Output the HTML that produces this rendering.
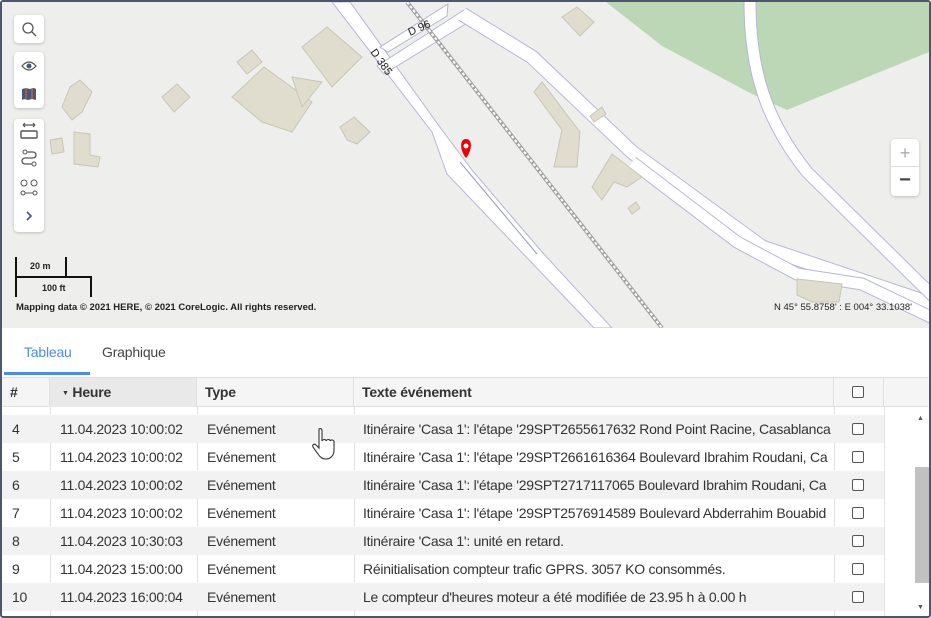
<!DOCTYPE html>
<html><head><meta charset="utf-8">
<style>
*{box-sizing:border-box;margin:0;padding:0}
body{width:931px;height:618px;overflow:hidden;background:#fff;font-family:"Liberation Sans",Arial,sans-serif;color:#333}
#frame{position:absolute;left:0;top:0;width:931px;height:618px;border:2px solid #4d5670;border-radius:3px;overflow:hidden}
#map{position:absolute;left:0;top:0;width:927px;height:326px;background:#eeefed;overflow:hidden}
.btn{position:absolute;left:12px;width:30px;background:#fff;border-radius:4px;box-shadow:0 1px 3px rgba(0,0,0,.2)}
.attr{position:absolute;font-size:9.5px;font-weight:bold;color:#222}
#tabs{position:absolute;top:326px;left:0;width:927px;height:50px;background:#fff}
.tab{position:absolute;top:16px;font-size:14px;letter-spacing:-0.2px}
#grid{position:absolute;top:373px;left:0;width:927px;height:243px}
.hdr{position:absolute;top:2px;height:30px;background:#f5f5f5;border-top:1px solid #e0e0e0;border-bottom:1px solid #e0e0e0;width:927px}
.hc{position:absolute;top:0;height:29px;line-height:28px;font-size:14px;font-weight:bold;padding-left:8px;border-right:1px solid #e0e0e0;letter-spacing:-0.2px}
.row{position:absolute;left:0;width:882px;height:28px;font-size:14px;line-height:28px;letter-spacing:-0.25px}
.row span{position:absolute;top:0;white-space:nowrap;overflow:hidden}
.cb{position:absolute;width:12px;height:12px;border:1px solid #555;border-radius:2px;background:#fff}
.vl{position:absolute;top:32px;width:1px;height:211px;background:#e3e3e3}
</style></head><body>
<div id="frame">
<div id="map">
<svg width="927" height="326" style="position:absolute;left:0;top:0">
<polygon points="604,0 927,0 927,50 785,108 750,92 660,44" fill="#bcd7b5"/>
<g stroke="#b6b7d3" stroke-width="1" fill="#fff">
<polygon points="330,0 348,0 440,128 470,168 540,250 610,326 592,326 445,172 430,130"/>
<polygon points="375,64 382,72 470,18 462,8"/>
<polygon points="378,45 386,50 445,14 446,2"/>
</g>
<g fill="none" stroke-linecap="butt">
<path d="M460,12 L530,55 L630,150 L760,245 L930,302" stroke="#b6b7d3" stroke-width="15"/>
<path d="M460,12 L530,55 L630,150 L760,245 L930,302" stroke="#fff" stroke-width="13"/>
<path d="M748,0 C748,70 765,120 805,170 L935,298" stroke="#b6b7d3" stroke-width="13"/>
<path d="M748,0 C748,70 765,120 805,170 L935,298" stroke="#fff" stroke-width="11"/>
<path d="M630,160 L735,240 L795,272 L860,282 L935,318" stroke="#b6b7d3" stroke-width="13"/>
<path d="M630,160 L735,240 L795,272 L860,282 L935,318" stroke="#fff" stroke-width="11"/>
</g>
<line x1="405" y1="0" x2="660" y2="326" stroke="#a0a0a0" stroke-width="4"/>
<line x1="405" y1="0" x2="660" y2="326" stroke="#fff" stroke-width="2" stroke-dasharray="3,2"/>
<line x1="458" y1="160" x2="535" y2="252" stroke="#9a9bc0" stroke-width="1"/>
<g fill="#e0ddce" stroke="#c9c6b6" stroke-width="1">
<polygon points="235,60 250,48 260,60 245,72"/>
<polygon points="230,95 262,65 310,100 290,130 260,120"/>
<polygon points="300,45 325,25 360,55 330,85"/>
<polygon points="290,75 320,80 300,105"/>
<polygon points="160,95 175,82 188,95 172,110"/>
<polygon points="60,105 68,85 78,78 90,90 80,110 70,118"/>
<polygon points="48,138 60,136 62,150 50,152"/>
<polygon points="72,130 88,132 88,153 98,155 96,165 72,162"/>
<polygon points="338,125 352,115 368,130 355,142 345,138"/>
<polygon points="560,15 575,5 592,20 578,34"/>
<polygon points="532,90 540,80 578,130 575,165 552,165 560,128"/>
<polygon points="588,114 600,105 604,112 592,120"/>
<polygon points="590,185 610,152 640,175 625,185 612,180 600,198"/>
<polygon points="626,206 634,200 638,206 630,212"/>
<polygon points="795,277 840,282 837,300 810,300 795,293"/>
</g>
<text x="408" y="34" font-size="11" fill="#222" transform="rotate(-24 408 34)">D 96</text>
<text x="368" y="50" font-size="11" fill="#222" transform="rotate(55 368 50)">D 385</text>
<path d="M464,156 C458,149 457,137 464,137 C471,137 470,149 464,156Z" fill="#e00" />
<circle cx="464" cy="144" r="2.5" fill="#fff"/>
<line x1="14" y1="255" x2="14" y2="295" stroke="#111" stroke-width="2"/>
<line x1="64" y1="255" x2="64" y2="275" stroke="#111" stroke-width="2"/>
<line x1="14" y1="275" x2="90" y2="275" stroke="#111" stroke-width="2"/>
<line x1="89" y1="275" x2="89" y2="295" stroke="#111" stroke-width="2"/>
<text x="28" y="267" font-size="9" font-weight="bold" fill="#222">20 m</text>
<text x="40" y="289" font-size="9" font-weight="bold" fill="#222">100 ft</text>
</svg>
<div class="btn" style="top:13px;height:28px">
<svg width="30" height="28"><circle cx="14" cy="13" r="5" stroke="#555" fill="none" stroke-width="1.3"/><line x1="18" y1="17" x2="22" y2="21" stroke="#555" stroke-width="1.3"/></svg></div>
<div class="btn" style="top:50px;height:56px">
<svg width="30" height="56"><path d="M8,14 Q15,6 22,14 Q15,22 8,14Z" fill="none" stroke="#555" stroke-width="1.3"/><circle cx="15" cy="14" r="2.5" fill="#4a5578"/>
<path d="M8,37 L12,36 L16,37 L20,36 L22,37 L22,48 L18,47 L14,48 L10,47 L8,48Z" fill="#4a5578"/><line x1="12" y1="36" x2="12" y2="47" stroke="#e07030"/><line x1="18" y1="36" x2="18" y2="47" stroke="#e07030"/></svg></div>
<div class="btn" style="top:117px;height:113px">
<svg width="30" height="113"><path d="M9,6 h12 M9,6 l2,-2 M9,6 l2,2 M21,6 l-2,-2 M21,6 l-2,2" stroke="#555" fill="none" stroke-width="1.2"/><rect x="7" y="12" width="16" height="7" rx="1" fill="none" stroke="#555" stroke-width="1.4"/>
<path d="M11,33 h8 a3,3 0 0 1 0,6 h-8 a3,3 0 0 0 0,6 h8" stroke="#555" fill="none" stroke-width="1.3"/><circle cx="11" cy="33" r="2" fill="#fff" stroke="#555"/><circle cx="20" cy="45" r="2" fill="#fff" stroke="#555"/>
<circle cx="10" cy="64" r="3" fill="none" stroke="#555"/><circle cx="20" cy="64" r="3" fill="none" stroke="#555"/><circle cx="9" cy="74" r="2" fill="none" stroke="#555"/><circle cx="21" cy="74" r="2" fill="none" stroke="#555"/><line x1="11" y1="74" x2="19" y2="74" stroke="#555"/>
<path d="M13,93 l4,4 l-4,4" stroke="#4a5578" fill="none" stroke-width="1.6"/></svg></div>
<div class="btn" style="left:889px;top:137px;height:57px;width:28px">
<div style="height:28px;border-bottom:1px solid #ddd;text-align:center;font-size:18px;line-height:28px;color:#aaa">+</div>
<div style="height:28px;text-align:center;font-size:20px;line-height:26px;color:#444;font-weight:bold">−</div></div>
<div class="attr" style="left:14px;top:300px">Mapping data © 2021 HERE, © 2021 CoreLogic. All rights reserved.</div>
<div class="attr" style="left:772px;top:300px;font-weight:normal;color:#222;font-size:9.5px">N 45° 55.8758' : E 004° 33.1038'</div>
</div>
<div id="tabs">
<div class="tab" style="left:22px;color:#4a8de8">Tableau</div>
<div class="tab" style="left:100px;color:#444">Graphique</div>
<div style="position:absolute;left:2px;top:44px;width:86px;height:3px;background:#4a8de8"></div>
</div>
<div id="grid">
<div class="hdr">
<div class="hc" style="left:0;width:48px">#</div>
<div class="hc" style="left:48px;width:147px;background:#e9e9e9;padding-left:12px"><span style="font-size:7px;vertical-align:2px">▼</span> Heure</div>
<div class="hc" style="left:195px;width:157px">Type</div>
<div class="hc" style="left:352px;width:480px">Texte événement</div>
<div class="hc" style="left:832px;width:50px"></div>
<div class="cb" style="left:850px;top:8px"></div>
</div>
<div class="vl" style="left:48px"></div><div class="vl" style="left:195px"></div><div class="vl" style="left:352px"></div><div class="vl" style="left:832px"></div><div class="vl" style="left:882px"></div>
<div class="row" style="top:40px;background:#f2f2f3"><span style="left:10px">4</span><span style="left:58px">11.04.2023 10:00:02</span><span style="left:205px">Evénement</span><span style="left:361px;width:471px">Itinéraire 'Casa 1': l'étape '29SPT2655617632 Rond Point Racine, Casablanca</span><div class="cb" style="left:850px;top:8px"></div></div>
<div class="row" style="top:68px"><span style="left:10px">5</span><span style="left:58px">11.04.2023 10:00:02</span><span style="left:205px">Evénement</span><span style="left:361px;width:471px">Itinéraire 'Casa 1': l'étape '29SPT2661616364 Boulevard Ibrahim Roudani, Ca</span><div class="cb" style="left:850px;top:8px"></div></div>
<div class="row" style="top:96px;background:#f2f2f3"><span style="left:10px">6</span><span style="left:58px">11.04.2023 10:00:02</span><span style="left:205px">Evénement</span><span style="left:361px;width:471px">Itinéraire 'Casa 1': l'étape '29SPT2717117065 Boulevard Ibrahim Roudani, Ca</span><div class="cb" style="left:850px;top:8px"></div></div>
<div class="row" style="top:124px"><span style="left:10px">7</span><span style="left:58px">11.04.2023 10:00:02</span><span style="left:205px">Evénement</span><span style="left:361px;width:471px">Itinéraire 'Casa 1': l'étape '29SPT2576914589 Boulevard Abderrahim Bouabid</span><div class="cb" style="left:850px;top:8px"></div></div>
<div class="row" style="top:152px;background:#f2f2f3"><span style="left:10px">8</span><span style="left:58px">11.04.2023 10:30:03</span><span style="left:205px">Evénement</span><span style="left:361px">Itinéraire 'Casa 1': unité en retard.</span><div class="cb" style="left:850px;top:8px"></div></div>
<div class="row" style="top:180px"><span style="left:10px">9</span><span style="left:58px">11.04.2023 15:00:00</span><span style="left:205px">Evénement</span><span style="left:361px">Réinitialisation compteur trafic GPRS. 3057 KO consommés.</span><div class="cb" style="left:850px;top:8px"></div></div>
<div class="row" style="top:208px;background:#f2f2f3"><span style="left:10px">10</span><span style="left:58px">11.04.2023 16:00:04</span><span style="left:205px">Evénement</span><span style="left:361px">Le compteur d'heures moteur a été modifiée de 23.95 h à 0.00 h</span><div class="cb" style="left:850px;top:8px"></div></div>
<div style="position:absolute;left:915px;top:40px;font-size:7px;color:#555">▲</div>
<div style="position:absolute;left:913px;top:92px;width:14px;height:116px;background:#c1c1c1"></div>
<div style="position:absolute;left:915px;top:229px;font-size:7px;color:#555">▼</div>
</div>
<svg width="30" height="34" style="position:absolute;left:308px;top:425px"><path d="M9,2 c2,-1 3,0 3,2 v10 c1,-2 4,-2 4,0 c1,-2 4,-2 4,0 c1,-2 4,-1 4,1 v8 c0,5 -3,9 -8,9 c-4,0 -6,-2 -8,-5 l-5,-7 c-1,-2 1,-4 3,-2 l3,3 v-17 c0,-1 0,-2 0,-2z" fill="#fff" stroke="#333" stroke-width="1.1"/></svg>
</div>
</body></html>
